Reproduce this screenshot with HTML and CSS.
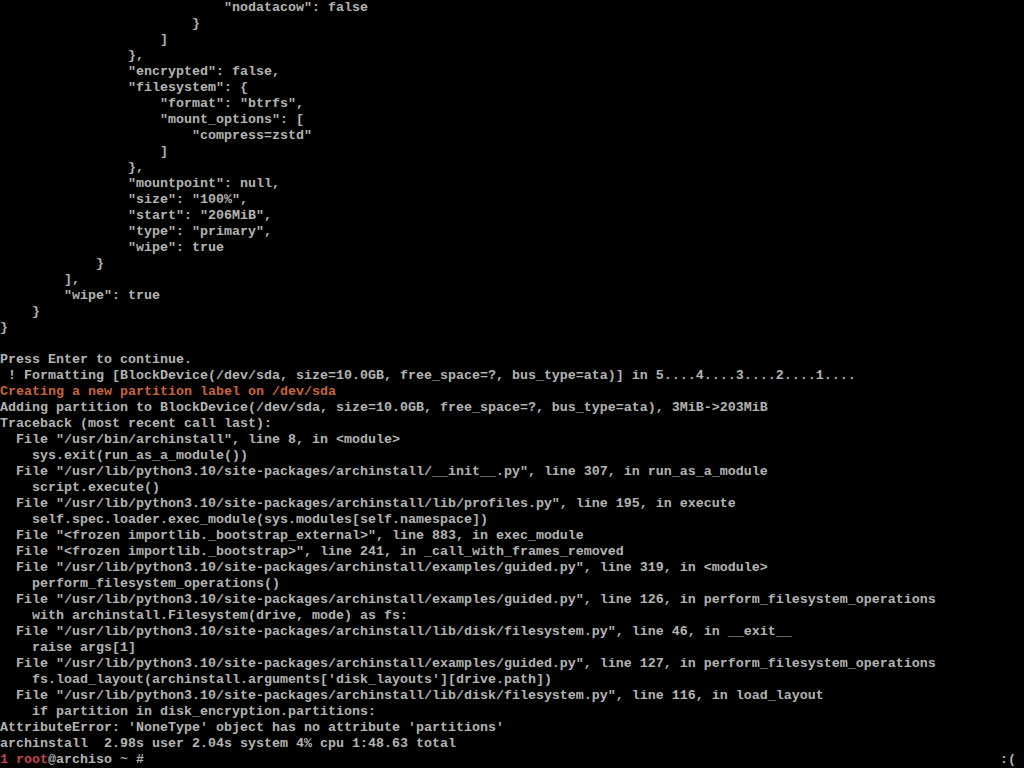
FILE: index.html
```html
<!DOCTYPE html>
<html>
<head>
<meta charset="utf-8">
<title>archinstall console</title>
<link rel="stylesheet" href="styles.css">
</head>
<body>
<main class="screen">
<div class="ln">                            "nodatacow": false</div>
<div class="ln">                        }</div>
<div class="ln">                    ]</div>
<div class="ln">                },</div>
<div class="ln">                "encrypted": false,</div>
<div class="ln">                "filesystem": {</div>
<div class="ln">                    "format": "btrfs",</div>
<div class="ln">                    "mount_options": [</div>
<div class="ln">                        "compress=zstd"</div>
<div class="ln">                    ]</div>
<div class="ln">                },</div>
<div class="ln">                "mountpoint": null,</div>
<div class="ln">                "size": "100%",</div>
<div class="ln">                "start": "206MiB",</div>
<div class="ln">                "type": "primary",</div>
<div class="ln">                "wipe": true</div>
<div class="ln">            }</div>
<div class="ln">        ],</div>
<div class="ln">        "wipe": true</div>
<div class="ln">    }</div>
<div class="ln">}</div>
<div class="ln"> </div>
<div class="ln">Press Enter to continue.</div>
<div class="ln"> ! Formatting [BlockDevice(/dev/sda, size=10.0GB, free_space=?, bus_type=ata)] in 5....4....3....2....1....</div>
<div class="ln warn">Creating a new partition label on /dev/sda</div>
<div class="ln">Adding partition to BlockDevice(/dev/sda, size=10.0GB, free_space=?, bus_type=ata), 3MiB-&gt;203MiB</div>
<div class="ln">Traceback (most recent call last):</div>
<div class="ln">  File "/usr/bin/archinstall", line 8, in &lt;module&gt;</div>
<div class="ln">    sys.exit(run_as_a_module())</div>
<div class="ln">  File "/usr/lib/python3.10/site-packages/archinstall/__init__.py", line 307, in run_as_a_module</div>
<div class="ln">    script.execute()</div>
<div class="ln">  File "/usr/lib/python3.10/site-packages/archinstall/lib/profiles.py", line 195, in execute</div>
<div class="ln">    self.spec.loader.exec_module(sys.modules[self.namespace])</div>
<div class="ln">  File "&lt;frozen importlib._bootstrap_external&gt;", line 883, in exec_module</div>
<div class="ln">  File "&lt;frozen importlib._bootstrap&gt;", line 241, in _call_with_frames_removed</div>
<div class="ln">  File "/usr/lib/python3.10/site-packages/archinstall/examples/guided.py", line 319, in &lt;module&gt;</div>
<div class="ln">    perform_filesystem_operations()</div>
<div class="ln">  File "/usr/lib/python3.10/site-packages/archinstall/examples/guided.py", line 126, in perform_filesystem_operations</div>
<div class="ln">    with archinstall.Filesystem(drive, mode) as fs:</div>
<div class="ln">  File "/usr/lib/python3.10/site-packages/archinstall/lib/disk/filesystem.py", line 46, in __exit__</div>
<div class="ln">    raise args[1]</div>
<div class="ln">  File "/usr/lib/python3.10/site-packages/archinstall/examples/guided.py", line 127, in perform_filesystem_operations</div>
<div class="ln">    fs.load_layout(archinstall.arguments['disk_layouts'][drive.path])</div>
<div class="ln">  File "/usr/lib/python3.10/site-packages/archinstall/lib/disk/filesystem.py", line 116, in load_layout</div>
<div class="ln">    if partition in disk_encryption.partitions:</div>
<div class="ln">AttributeError: 'NoneType' object has no attribute 'partitions'</div>
<div class="ln">archinstall  2.98s user 2.04s system 4% cpu 1:48.63 total</div>
<div class="ln prompt"><span><span class="red">1 root</span>@archiso <span class="dim">~</span> #</span><span class="rprompt">:(</span></div>
</main>
</body>
</html>
```

FILE: styles.css
```css
html, body {
  margin: 0;
  padding: 0;
  background: #000;
}

.screen {
  width: 1024px;
  height: 768px;
  display: flex;
  flex-direction: column;
  background: #000;
  color: #b4b4b4;
  font-family: "Liberation Mono", "DejaVu Sans Mono", monospace;
  font-size: 13.333px;
  font-weight: bold;
  overflow: hidden;
}

.ln {
  height: 16px;
  line-height: 16px;
  white-space: pre;
  flex: 0 0 16px;
}

.warn {
  color: #c8663a;
}

.red {
  color: #c8404e;
}

.dim {
  color: #9a9a9a;
}

.prompt {
  display: flex;
  justify-content: space-between;
  padding-right: 8px;
}

.rprompt {
  color: #b4b4b4;
}
```
